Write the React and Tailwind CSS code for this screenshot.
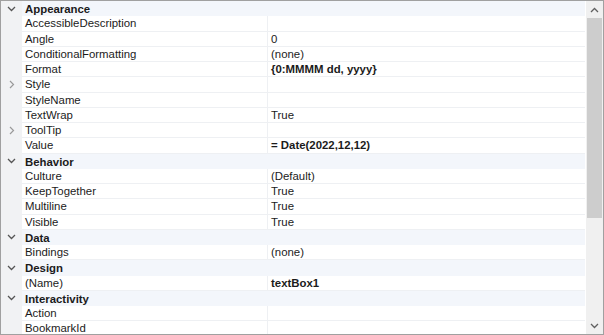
const GROUPS = [
  {
    name: 'Appearance',
    items: [
      { k: 'AccessibleDescription' },
      { k: 'Angle', v: '0' },
      { k: 'ConditionalFormatting', v: '(none)' },
      { k: 'Format', v: '{0:MMMM dd, yyyy}', bold: true },
      { k: 'Style', sub: true },
      { k: 'StyleName' },
      { k: 'TextWrap', v: 'True' },
      { k: 'ToolTip', sub: true },
      { k: 'Value', v: '= Date(2022,12,12)', bold: true },
    ],
  },
  {
    name: 'Behavior',
    items: [
      { k: 'Culture', v: '(Default)' },
      { k: 'KeepTogether', v: 'True' },
      { k: 'Multiline', v: 'True' },
      { k: 'Visible', v: 'True' },
    ],
  },
  { name: 'Data', items: [{ k: 'Bindings', v: '(none)' }] },
  { name: 'Design', items: [{ k: '(Name)', v: 'textBox1', bold: true }] },
  { name: 'Interactivity', items: [{ k: 'Action' }, { k: 'BookmarkId' }] },
]

function ChevronDown({ className }) {
  return (
    <svg width="9" height="6" viewBox="0 0 9 6" className={className}>
      <path d="M1 1 L4.5 4.5 L8 1" fill="none" stroke="currentColor" strokeWidth="1.3" />
    </svg>
  )
}

function ChevronRight() {
  return (
    <svg width="6" height="9" viewBox="0 0 6 9">
      <path d="M1 1 L4.5 4.5 L1 8" fill="none" stroke="#9a9a9a" strokeWidth="1.2" />
    </svg>
  )
}

export default function App() {
  return (
    <div
      className="w-[604px] h-[335px] border border-[#a0a0a0] flex bg-white text-[11.4px] text-[#1b1b1b] overflow-hidden"
      style={{ fontFamily: '"Liberation Sans", Arial, sans-serif' }}
    >
      <div className="flex-1 overflow-hidden bg-[#f1f2f4]">
        {GROUPS.map(g => (
          <div key={g.name}>
            {/* category header */}
            <div className="flex h-[15.25px] items-center">
              <div className="w-[21px] flex items-center justify-center text-[#555]">
                <ChevronDown />
              </div>
              <div className="flex-1 h-full bg-[#f3f6fb] pl-[3px] font-bold leading-[16px]">{g.name}</div>
            </div>
            {g.items.map(it => (
              <div key={it.k} className="flex h-[15.25px]">
                <div className="w-[21px] flex items-center justify-center">
                  {it.sub && <ChevronRight />}
                </div>
                <div className="w-[245px] bg-white border-b border-[#eef0f3] pl-[3px] leading-[15px] whitespace-nowrap">
                  {it.k}
                </div>
                <div className={`flex-1 bg-white border-b border-l border-[#eef0f3] pl-[3px] leading-[15px] whitespace-nowrap ${it.bold ? 'font-bold' : ''}`}>
                  {it.v}
                </div>
              </div>
            ))}
          </div>
        ))}
      </div>

      {/* scrollbar */}
      <div className="w-[17px] ml-px flex flex-col bg-[#f0f0f0]">
        <div className="h-[17px] flex items-center justify-center text-[#606060]">
          <ChevronDown className="rotate-180" />
        </div>
        <div className="mx-px h-[200px] bg-[#cdcdcd]" />
        <div className="flex-1" />
        <div className="h-[17px] flex items-center justify-center text-[#606060]">
          <ChevronDown />
        </div>
      </div>
    </div>
  )
}
